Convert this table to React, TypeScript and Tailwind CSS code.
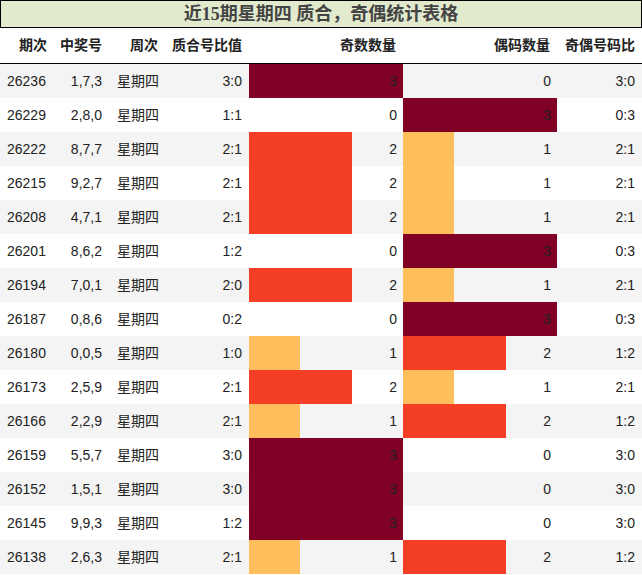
import React from "react"

type Row = {
  qi: string
  nums: string
  zhiHe: string
  odd: number
  even: number
}

const ROWS: Row[] = [
  { qi: "26236", nums: "1,7,3", zhiHe: "3:0", odd: 3, even: 0 },
  { qi: "26229", nums: "2,8,0", zhiHe: "1:1", odd: 0, even: 3 },
  { qi: "26222", nums: "8,7,7", zhiHe: "2:1", odd: 2, even: 1 },
  { qi: "26215", nums: "9,2,7", zhiHe: "2:1", odd: 2, even: 1 },
  { qi: "26208", nums: "4,7,1", zhiHe: "2:1", odd: 2, even: 1 },
  { qi: "26201", nums: "8,6,2", zhiHe: "1:2", odd: 0, even: 3 },
  { qi: "26194", nums: "7,0,1", zhiHe: "2:0", odd: 2, even: 1 },
  { qi: "26187", nums: "0,8,6", zhiHe: "0:2", odd: 0, even: 3 },
  { qi: "26180", nums: "0,0,5", zhiHe: "1:0", odd: 1, even: 2 },
  { qi: "26173", nums: "2,5,9", zhiHe: "2:1", odd: 2, even: 1 },
  { qi: "26166", nums: "2,2,9", zhiHe: "2:1", odd: 1, even: 2 },
  { qi: "26159", nums: "5,5,7", zhiHe: "3:0", odd: 3, even: 0 },
  { qi: "26152", nums: "1,5,1", zhiHe: "3:0", odd: 3, even: 0 },
  { qi: "26145", nums: "9,9,3", zhiHe: "1:2", odd: 3, even: 0 },
  { qi: "26138", nums: "2,6,3", zhiHe: "2:1", odd: 1, even: 2 },
]

const BAR_COLOR: Record<number, string> = {
  1: "bg-[#fdbe5b]",
  2: "bg-[#f43f26]",
  3: "bg-[#800026]",
}

const COLS = "grid grid-cols-[54px_55px_56px_84px_154px_154px_85px]"

function BarCell({ value }: { value: number }) {
  return (
    <div className="relative flex items-center justify-end pr-[6px]">
      {value > 0 ? (
        <div
          className={`absolute inset-y-0 left-0 ${BAR_COLOR[value]}`}
          style={{ width: `${(value / 3) * 100}%` }}
        />
      ) : null}
      <span className="relative">{value}</span>
    </div>
  )
}

export default function App() {
  return (
    <div
      className="w-[642px] bg-white text-[14px] text-[#222]"
      style={{ fontFamily: '"Liberation Sans", "Noto Sans CJK SC", sans-serif' }}
    >
      <div className="flex h-[28px] items-center justify-center border border-black bg-[#e2eacd] text-[18px] font-bold text-[#444]">
        <span style={{ fontFamily: '"Liberation Serif", "Noto Sans CJK SC", serif' }}>
          近15期星期四 质合，奇偶统计表格
        </span>
      </div>
      <div className={`${COLS} h-[36px] items-center border-b border-black font-bold text-[#222] [&>div]:pr-[7px] [&>div]:text-right`}>
        <div>期次</div>
        <div>中奖号</div>
        <div>周次</div>
        <div>质合号比值</div>
        <div>奇数数量</div>
        <div>偶码数量</div>
        <div>奇偶号码比</div>
      </div>
      {ROWS.map((r, i) => (
        <div key={r.qi} className={`${COLS} h-[34px] ${i % 2 === 0 ? "bg-[#f4f4f4]" : "bg-white"}`}>
          <div className="flex items-center pl-[7px]">{r.qi}</div>
          <div className="flex items-center justify-end pr-[7px]">{r.nums}</div>
          <div className="flex items-center pl-[8px]">星期四</div>
          <div className="flex items-center justify-end pr-[7px]">{r.zhiHe}</div>
          <BarCell value={r.odd} />
          <BarCell value={r.even} />
          <div className="flex items-center justify-end pr-[7px]">
            {r.odd}:{r.even}
          </div>
        </div>
      ))}
    </div>
  )
}
